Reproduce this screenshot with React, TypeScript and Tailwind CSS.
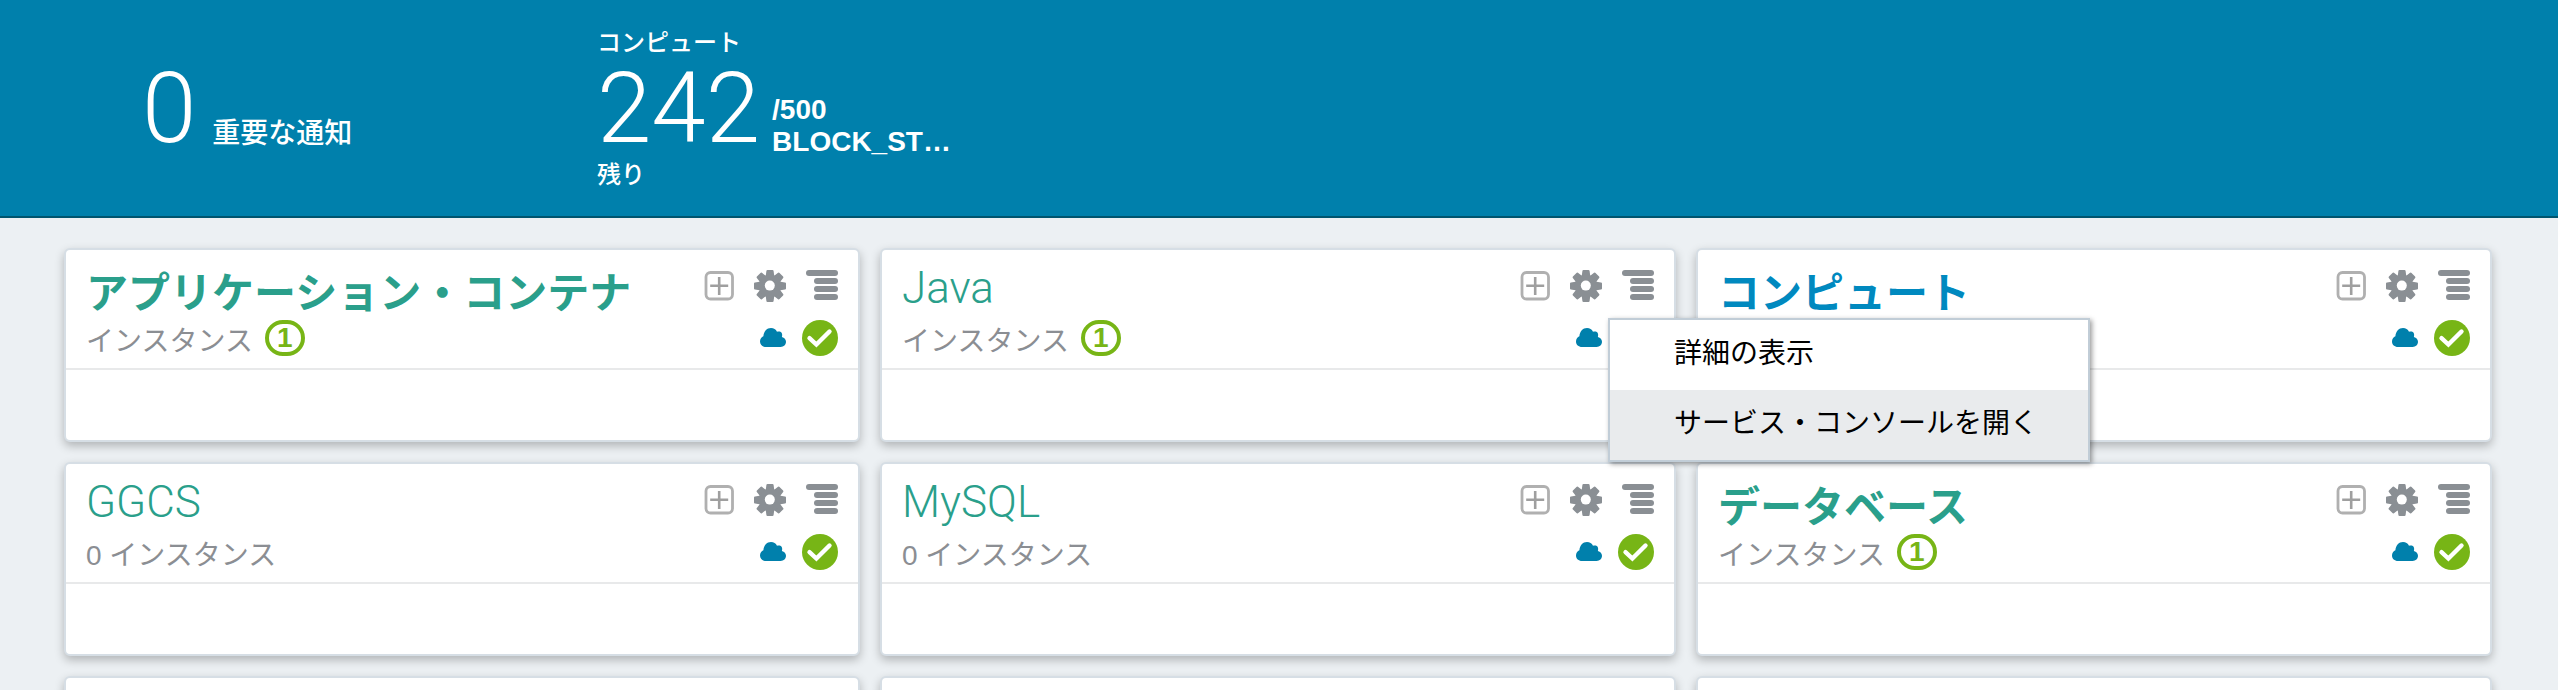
import React from "react";

type Service = {
  name: string;
  kind: "ja" | "latin";
  instances?: number;
  accent: "green" | "blue";
  menuOpen?: boolean;
};

const services: Service[] = [
  { name: "アプリケーション・コンテナ", kind: "ja", instances: 1, accent: "green" },
  { name: "Java", kind: "latin", instances: 1, accent: "green", menuOpen: true },
  { name: "コンピュート", kind: "ja", accent: "blue" },
  { name: "GGCS", kind: "latin", instances: 0, accent: "green" },
  { name: "MySQL", kind: "latin", instances: 0, accent: "green" },
  { name: "データベース", kind: "ja", instances: 1, accent: "green" },
];

function PlusIcon() {
  return (
    <svg className="h-8 w-[30px]" viewBox="0 0 30 32" fill="none" aria-hidden="true">
      <rect x="2" y="2.5" width="26.5" height="26.5" rx="4.5" stroke="#b0b0b0" strokeWidth="2.8" />
      <path d="M15.2 7v18M6.2 15.8h18" stroke="#9f9f9f" strokeWidth="2.6" />
    </svg>
  );
}

function GearIcon() {
  const teeth = [0, 45, 90, 135, 180, 225, 270, 315];
  return (
    <svg className="size-8" viewBox="0 0 32 32" aria-hidden="true">
      <g fill="#8a8f94">
        {teeth.map((angle) => (
          <path key={angle} d="M11.6 7 12.4 1q.1-1 1.100-1h5q1 0 1.100 1L20.400 7z" transform={`rotate(${angle} 16 16)`} />
        ))}
        <circle cx="16" cy="16" r="11.2" />
      </g>
      <circle cx="15.8" cy="15.6" r="5" fill="#fff" />
    </svg>
  );
}

function MenuIcon() {
  return (
    <svg className="size-8" viewBox="0 0 32 32" fill="#8a8f94" aria-hidden="true">
      <rect x="0" y="0" width="32" height="6" rx="3" />
      <rect x="8" y="8" width="24" height="6" rx="3" />
      <rect x="8" y="16" width="24" height="6" rx="3" />
      <rect x="8" y="24" width="24" height="6" rx="3" />
    </svg>
  );
}

function CloudIcon() {
  return (
    <svg className="h-5 w-[26px]" viewBox="0 0 26 20" aria-hidden="true">
      <path
        fill="#0080ac"
        d="M6 19C2.600 19 0 16.700 0 13.500c0-2.700 1.500-4.600 3.400-5.300C3.800 3.400 6.800 0 11 0c2.800 0 4.800 1.200 6 3.700 1.200-.4 2.700-.4 3.800.2 1.300.8 1.700 2.600 1.100 5 2.500.6 4.100 2.500 4.100 4.900 0 3-2.300 5.200-5.400 5.200z"
      />
    </svg>
  );
}

function CheckIcon() {
  return (
    <svg className="size-9" viewBox="0 0 36 36" role="img" aria-label="OK">
      <circle cx="18" cy="18" r="18" fill="#77b516" />
      <path d="M7.500 18.200 14.400 24.500 27.500 11.500" fill="none" stroke="#fff" strokeWidth="4.400" strokeLinecap="round" />
    </svg>
  );
}

function ActionMenu() {
  return (
    <div
      role="menu"
      className="absolute top-12 -left-3.5 z-10 w-[482px] border-2 border-[#c1cdd7] bg-white text-[28px] text-black shadow-[2px_2px_5px_rgba(0,0,0,0.4)]"
    >
      <button type="button" role="menuitem" className="block h-[70px] w-full pb-0.5 pl-16 text-left">
        詳細の表示
      </button>
      <button type="button" role="menuitem" className="block h-[70px] w-full bg-[#e9ebed] pb-0.5 pl-16 text-left">
        サービス・コンソールを開く
      </button>
    </div>
  );
}

function InstanceCount({ count }: { count: number }) {
  return (
    <p className="flex h-9 items-end gap-3 text-[28px] leading-7 text-[#8b8e93]">
      {count === 0 ? (
        "0 インスタンス"
      ) : (
        <>
          インスタンス
          <span className="flex h-9 w-10 items-center justify-center rounded-[18px] border-4 border-[#77b516] font-bold text-[#77b516]">
            {count}
          </span>
        </>
      )}
    </p>
  );
}

function ServiceCard({ service }: { service: Service }) {
  const color = service.accent === "green" ? "text-[#2a9f8b]" : "text-[#0089bf]";
  const face =
    service.kind === "ja"
      ? "pt-[14px] text-[42px] font-bold"
      : "pt-2 text-[44px] font-light font-[Roboto,'Noto_Sans_CJK_JP',sans-serif]";
  return (
    <article className="rounded-md border-2 border-[#d6dee5] bg-white shadow-[0_4px_10px_rgba(0,0,0,0.25)]">
      <div className="flex h-[120px] justify-between border-b-2 border-[#e8e9ea] px-5">
        <div>
          <h2 className={`h-[70px] leading-[60px] ${face} ${color}`}>
            <a href="#service">{service.name}</a>
          </h2>
          {service.instances !== undefined && <InstanceCount count={service.instances} />}
        </div>
        <div className="flex flex-col items-end gap-[18px] pt-5">
          <div className="flex gap-5">
            <button type="button" aria-label="作成"><PlusIcon /></button>
            <button type="button" aria-label="設定"><GearIcon /></button>
            <div className="relative">
              <button type="button" className="block" aria-label="メニュー"><MenuIcon /></button>
              {service.menuOpen && <ActionMenu />}
            </div>
          </div>
          <div className="flex items-center gap-4">
            <CloudIcon />
            <CheckIcon />
          </div>
        </div>
      </div>
      <div className="h-[70px]" />
    </article>
  );
}

export default function App() {
  return (
    <div className="h-screen overflow-hidden bg-[#ecf0f3] font-['Liberation_Sans','Noto_Sans_CJK_JP',sans-serif]">
      <header className="flex h-[218px] items-start border-b-2 border-[#00556f] bg-[#0080ac] pl-[142px] text-white">
        <div className="flex w-[455px] items-end gap-4 pt-[60px]">
          <span className="font-[Roboto,sans-serif] text-[98px] leading-[98px] font-light">0</span>
          <span className="pb-1 text-[28px] leading-10 font-medium">重要な通知</span>
        </div>
        <div className="pt-[26px]">
          <div className="text-[24px] leading-[34px] font-medium">コンピュート</div>
          <div className="flex items-end gap-3">
            <span className="font-[Roboto,sans-serif] text-[98px] leading-[98px] font-light">242</span>
            <div className="text-[28px] leading-8 font-bold">
              <div>/500</div>
              <div>BLOCK_ST…</div>
            </div>
          </div>
          <div className="text-[24px] leading-[34px] font-medium">残り</div>
        </div>
      </header>
      <main className="grid grid-cols-3 gap-5 pt-[30px] pr-[66px] pl-16">
        {services.map((service) => (
          <ServiceCard key={service.name} service={service} />
        ))}
        {[0, 1, 2].map((i) => (
          <div
            key={i}
            className="h-[194px] rounded-md border-2 border-[#d6dee5] bg-white shadow-[0_4px_10px_rgba(0,0,0,0.25)]"
          />
        ))}
      </main>
    </div>
  );
}
